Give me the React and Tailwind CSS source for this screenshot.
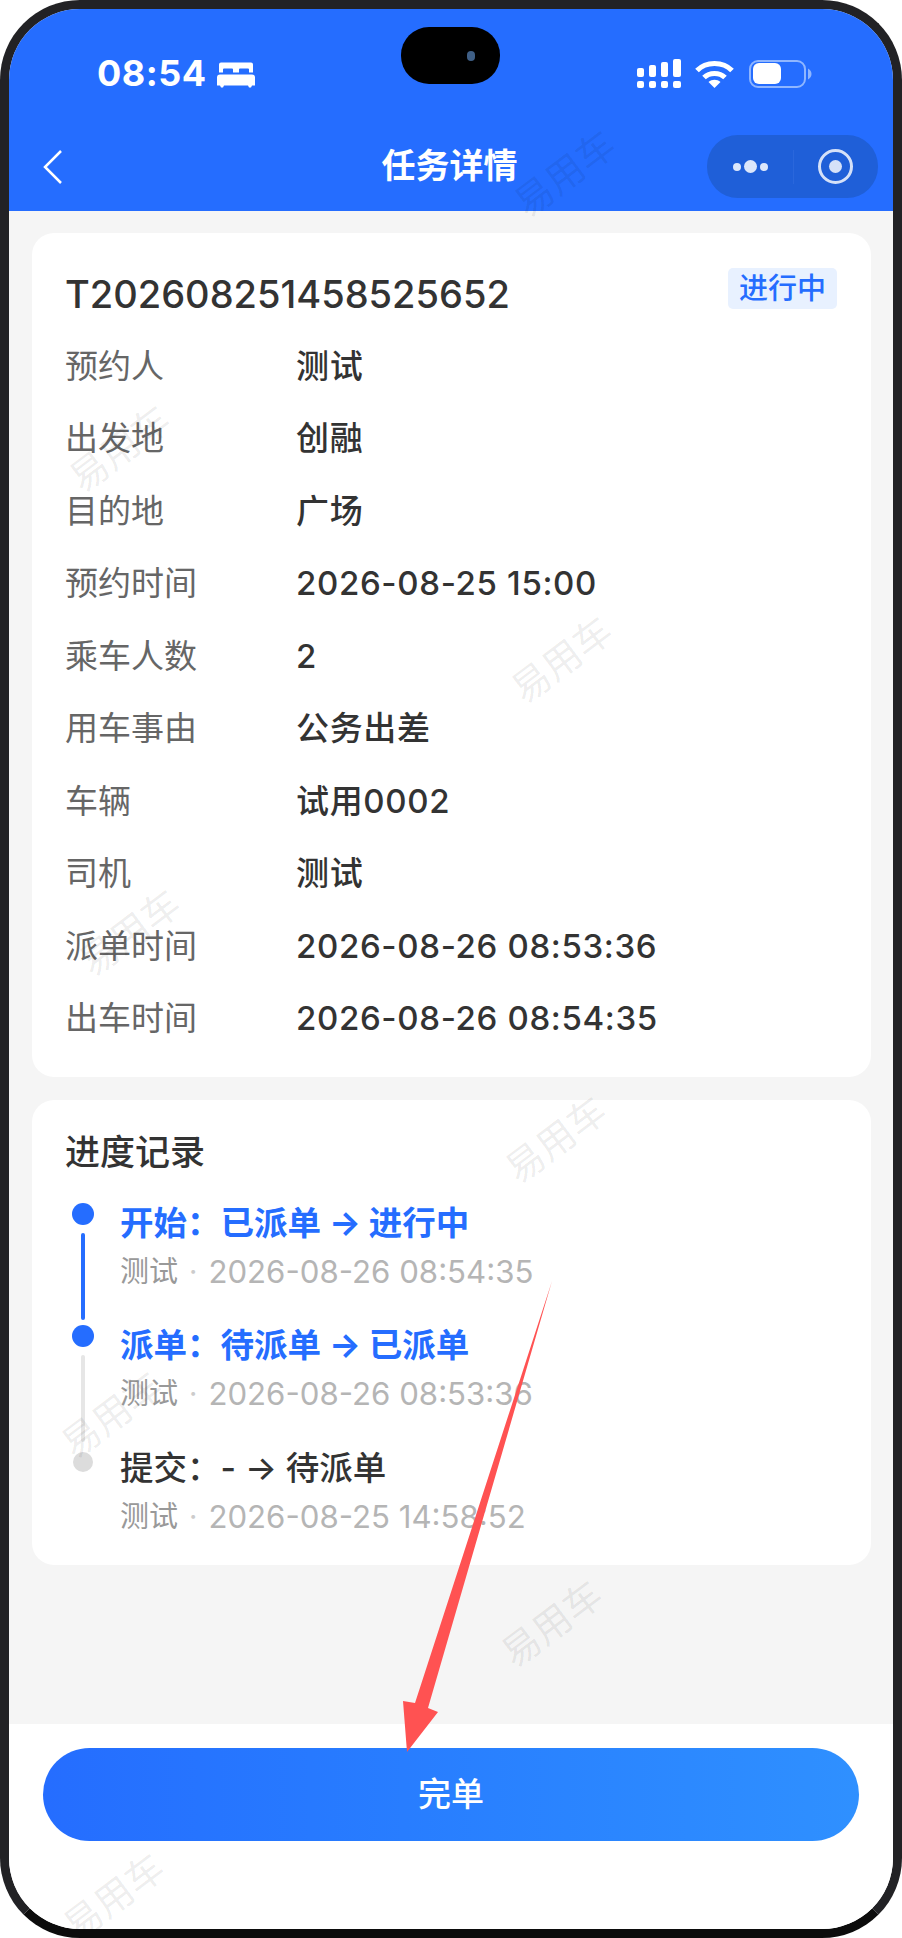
import React from 'react';

const FONT = "font-['Inter','Noto_Sans_CJK_SC',sans-serif]";

const ROWS = [
  ['预约人', '测试'],
  ['出发地', '创融'],
  ['目的地', '广场'],
  ['预约时间', '2026-08-25 15:00'],
  ['乘车人数', '2'],
  ['用车事由', '公务出差'],
  ['车辆', '试用0002'],
  ['司机', '测试'],
  ['派单时间', '2026-08-26 08:53:36'],
  ['出车时间', '2026-08-26 08:54:35'],
];

const RECORDS = [
  { title: '开始：已派单 → 进行中', time: '2026-08-26 08:54:35', active: true, line: 'bg-[#256dff]' },
  { title: '派单：待派单 → 已派单', time: '2026-08-26 08:53:36', active: true, line: 'bg-[#e6e6e6]' },
  { title: '提交：- → 待派单', time: '2026-08-25 14:58:52', active: false },
];

const MARKS = [
  'left-[556px] top-[165px]',
  'left-[111px] top-[440px]',
  'left-[553px] top-[651px]',
  'left-[121px] top-[924px]',
  'left-[547px] top-[1131px]',
  'left-[103px] top-[1406px]',
  'left-[543px] top-[1615px]',
  'left-[105px] top-[1888px]',
];

const StatusIcons = () => (
  <div className="flex items-start">
    <svg width="44" height="29" viewBox="0 0 44 29" fill="#fff">
      <rect x="0" y="9" width="7" height="9" rx="2" />
      <rect x="0" y="22" width="7" height="7" rx="2" />
      <rect x="12" y="6" width="7" height="12" rx="2" />
      <rect x="12" y="22" width="7" height="7" rx="2" />
      <rect x="24" y="3" width="7" height="15" rx="2" />
      <rect x="24" y="22" width="7" height="7" rx="2" />
      <rect x="36" y="0" width="8" height="18" rx="2" />
      <rect x="36" y="22" width="8" height="7" rx="2" />
    </svg>
    <svg className="ml-[14px] mt-px" width="39" height="28" viewBox="0 0 39 28" fill="none" stroke="#fff" strokeWidth="5">
      <path d="M2 10.5C11 1 28 1 37 10.5" />
      <path d="M9 17.5C14.5 12 24.5 12 30 17.5" />
      <path d="M19.5 28L13.5 22C17 19 22 19 25.5 22Z" fill="#fff" stroke="none" />
    </svg>
    <svg className="ml-[15px] mt-px" width="63" height="28" viewBox="0 0 63 28" fill="none">
      <rect x="1" y="1" width="55" height="26" rx="8" stroke="#8fb6ff" strokeWidth="2" />
      <rect x="4" y="3" width="28" height="21" rx="6" fill="#fff" />
      <path d="M59 8.5C61.5 10 62.5 12 62.5 14C62.5 16 61.5 18 59 19.5Z" fill="#8fb6ff" />
    </svg>
  </div>
);

const Header = () => (
  <header className="bg-[#256dff] h-[202px] shrink-0 flex flex-col text-white">
    <div className="relative h-[126px] flex justify-between items-start pt-[50px] pl-[88px] pr-[81px]">
      <div className="flex items-center gap-[10px]">
        <span className="font-['Inter',sans-serif] text-[36px] tracking-[0.5px] leading-[29px] font-bold">08:54</span>
        <svg className="mt-[2px]" width="38" height="26" viewBox="0 0 38 25" fill="#fff">
          <path d="M4 0h30a2 2 0 0 1 2 2v8h-4V7a1 1 0 0 0-1-1h-8a1 1 0 0 0-1 1v3h-6V7a1 1 0 0 0-1-1H7a1 1 0 0 0-1 1v3H2V2a2 2 0 0 1 2-2z" />
          <path d="M3 12h32a3 3 0 0 1 3 3v8h-3l-1 2h-2l-1-2H7l-1 2H4l-1-2H0v-8a3 3 0 0 1 3-3z" />
        </svg>
      </div>
      <StatusIcons />
      <div className="absolute left-[392px] top-[18px] w-[99px] h-[57px] rounded-[28px] bg-black flex items-center justify-end pr-[25px]">
        <div className="w-[8px] h-[10px] rounded-full bg-[#3f5f86]" />
      </div>
    </div>
    <nav className="relative h-[62px] flex items-center justify-center">
      <svg className="absolute left-[34px] top-[15px]" width="20" height="34" viewBox="0 0 20 34" fill="none" stroke="#fff" strokeWidth="2.5">
        <path d="M18 1L2 17l16 16" />
      </svg>
      <h1 className={`${FONT} text-[34px] leading-[62px] font-bold -ml-[3px]`}>任务详情</h1>
      <div className="absolute left-[698px] top-0 w-[171px] h-[63px] rounded-[31px] bg-[#1f5fd8] flex items-center">
        <div className="w-[86px] flex items-center justify-center gap-[3px]">
          <div className="w-[8px] h-[8px] rounded-full bg-[#dce7fb]" />
          <div className="w-[13px] h-[13px] rounded-full bg-[#dce7fb]" />
          <div className="w-[8px] h-[8px] rounded-full bg-[#dce7fb]" />
        </div>
        <div className="w-px h-[34px] bg-[#2a67dc]" />
        <div className="flex-1 flex items-center justify-center pr-[2px]">
          <div className="w-[35px] h-[35px] rounded-full border-[3px] border-[#d5e1f8] flex items-center justify-center">
            <div className="w-[13px] h-[13px] rounded-full bg-[#d5e1f8]" />
          </div>
        </div>
      </div>
    </nav>
  </header>
);

const DetailCard = () => (
  <section className="bg-white rounded-[22px] h-[844px] pl-[33px] pr-[34px] pt-[35px] text-[#333]">
    <div className="flex items-start justify-between h-[50px]">
      <div className="font-['Inter',sans-serif] text-[38px] font-medium leading-[52px]">T202608251458525652</div>
      <span className={`${FONT} bg-[#e8f1ff] text-[#256dff] text-[29px] leading-[41px] h-[41px] px-[11px] rounded-[5px] font-medium`}>进行中</span>
    </div>
    <div className="mt-[12px]">
      {ROWS.map(([label, value]) => (
        <div key={label} className="flex items-center h-[72.5px]">
          <span className={`${FONT} w-[231px] text-[33px] text-[#666]`}>{label}</span>
          <span className={`${FONT} text-[33px] tracking-[0.65px] font-medium`}>{value}</span>
        </div>
      ))}
    </div>
  </section>
);

const ProgressCard = () => (
  <section className="mt-[23px] bg-white rounded-[22px] h-[465px] px-[34px] pt-[28px]">
    <h2 className={`${FONT} text-[35px] leading-[48px] font-medium text-[#333] -ml-px`}>进度记录</h2>
    <div className="mt-[24px]">
      {RECORDS.map((r) => (
        <div key={r.time} className="flex h-[122.4px]">
          <div className="w-[54px] shrink-0">
            <div className="w-[34px] flex flex-col items-center">
              <div className={r.active ? 'w-[22px] h-[22px] rounded-full bg-[#256dff] mt-[3px]' : 'w-[20px] h-[20px] rounded-full bg-[#dcdcdc] mt-[7px]'} />
              {r.line && <div className={`w-[4px] h-[87px] mt-[8px] rounded-full ${r.line}`} />}
            </div>
          </div>
          <div>
            <div className={`${FONT} text-[33.5px] leading-[46px] ${r.active ? 'font-bold text-[#256dff]' : 'font-medium text-[#333]'}`}>{r.title}</div>
            <div className={`${FONT} text-[29px] leading-[40px] mt-[6px] text-[#b5b5b5] whitespace-pre flex items-center`}>
              <span className="text-[#999]">测试</span>
              <span className="mx-[11px] text-[#ccc]">·</span>
              <span className="text-[31.2px]">{r.time}</span>
            </div>
          </div>
        </div>
      ))}
    </div>
  </section>
);

export default function App() {
  return (
    <div className="w-[902px] h-[1938px] bg-white">
      <div className={`relative w-full h-full rounded-[80px] border-[9px] border-[#222225] border-b-[#0c0c0c] overflow-hidden flex flex-col bg-[#f5f5f5] ${FONT}`}>
        <Header />
        <main className="flex-1 pl-[23px] pr-[22px] pt-[22px]">
          <DetailCard />
          <ProgressCard />
        </main>
        <div className="bg-white h-[205px] shrink-0 px-[34px] pt-[24px]">
          <button className={`${FONT} w-full h-[93px] rounded-[47px] bg-gradient-to-r from-[#256dff] to-[#2f90ff] text-white text-[33px] font-medium`}>完单</button>
        </div>
        {MARKS.map((pos) => (
          <span key={pos} className={`absolute ${pos} -translate-x-1/2 -translate-y-1/2 rotate-[-37deg] text-[38px] text-black/[0.08] pointer-events-none`}>易用车</span>
        ))}
        <svg className="absolute left-0 top-0 pointer-events-none" width="884" height="1920" viewBox="0 0 884 1920" fill="#ff5252">
          <path d="M543 1272L419 1699L429 1703L398 1743L394 1692L406 1694Z" />
        </svg>
      </div>
    </div>
  );
}
